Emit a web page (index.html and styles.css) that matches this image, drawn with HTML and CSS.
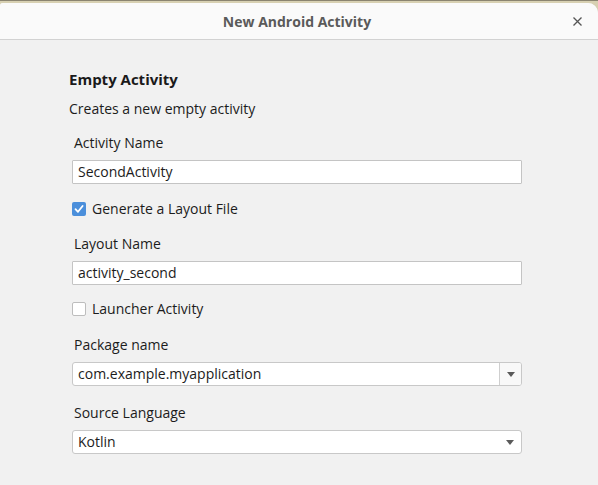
FILE: index.html
```html
<!DOCTYPE html>
<html>
<head>
<meta charset="utf-8">
<link rel="stylesheet" href="styles.css">
</head>
<body>
<div class="backdrop">
  <div class="dialog">
    <header class="titlebar">
      <span class="title">New Android Activity</span>
      <span class="close">
        <svg width="9" height="9" viewBox="0 0 9 9"><path d="M0.5 0.5L8.5 8.5M8.5 0.5L0.5 8.5" stroke="#555" stroke-width="1.3" fill="none"/></svg>
      </span>
    </header>
    <main class="content">
      <h1 class="heading">Empty Activity</h1>
      <p class="desc">Creates a new empty activity</p>

      <div class="label">Activity Name</div>
      <div class="input">SecondActivity</div>

      <div class="check first">
        <span class="box checked">
          <svg width="14" height="14" viewBox="0 0 14 14"><path d="M3.5 7.2L6 9.8L10.6 4" stroke="#fff" stroke-width="1.8" fill="none" stroke-linecap="round" stroke-linejoin="round"/></svg>
        </span>
        <span>Generate a Layout File</span>
      </div>

      <div class="label">Layout Name</div>
      <div class="input">activity_second</div>

      <div class="check">
        <span class="box"></span>
        <span>Launcher Activity</span>
      </div>

      <div class="label pkg">Package name</div>
      <div class="combo editable">
        <span class="combo-text">com.example.myapplication</span>
        <span class="combo-btn"><span class="arrow"></span></span>
      </div>

      <div class="label">Source Language</div>
      <div class="combo">
        <span class="combo-text">Kotlin</span>
        <span class="combo-btn"><span class="arrow"></span></span>
      </div>
    </main>
  </div>
</div>
</body>
</html>
```

FILE: styles.css
```css
* { box-sizing: border-box; }
html, body {
  margin: 0;
  padding: 0;
  width: 598px;
  height: 485px;
  overflow: hidden;
}
body {
  font-family: "Open Sans", "Noto Sans", sans-serif;
  font-size: 14px;
  color: #1c1c1c;
  background: #d7d0b2;
}
.backdrop {
  padding-top: 2px;
  height: 485px;
  border-top: 1px solid #8a8470;
}
.dialog {
  background: #f1f1f1;
  height: 100%;
  border-radius: 3px 10px 0 0;
  overflow: hidden;
}
.titlebar {
  height: 37px;
  background: #fafafa;
  border-bottom: 1px solid #d2d2d2;
  display: flex;
  align-items: center;
  justify-content: center;
  position: relative;
}
.title {
  font-weight: 700;
  font-size: 14px;
  color: #5a5a5a;
  margin-top: 1px;
  margin-right: 4px;
}
.close {
  position: absolute;
  right: 16px;
  top: 14px;
  display: flex;
}
.content {
  padding: 29px 0 0 69px;
  display: flex;
  flex-direction: column;
  align-items: flex-start;
}
.heading {
  margin: 0;
  font-size: 15px;
  line-height: 20px;
  font-weight: 700;
  color: #1a1a1a;
}
.desc {
  margin: 11px 0 0 0;
  line-height: 18px;
}
.label {
  margin: 16px 0 0 5px;
  line-height: 18px;
}
.check + .label { margin-top: 17px; }
.check + .label.pkg { margin-top: 18px; }
.combo + .label { margin-top: 18px; }
.input {
  margin: 8px 0 0 3px;
  width: 450px;
  height: 24px;
  background: #fff;
  border: 1px solid #c4c4c4;
  border-radius: 1px;
  padding: 0 5px;
  line-height: 22px;
}
.check {
  margin: 15px 0 0 3px;
  display: flex;
  align-items: center;
  gap: 6px;
  line-height: 18px;
}
.check.first { margin-top: 16px; }
.box {
  width: 14px;
  height: 14px;
  border-radius: 2px;
  background: #fff;
  border: 1px solid #bdbdbd;
  display: flex;
}
.box.checked {
  background: #4b8fdb;
  border: none;
}
.combo {
  margin: 8px 0 0 3px;
  width: 450px;
  height: 24px;
  background: #fff;
  border: 1px solid #c8c8c8;
  border-radius: 3px;
  display: flex;
  align-items: stretch;
  overflow: hidden;
}
.combo-text {
  flex: 1;
  padding: 0 5px;
  line-height: 22px;
}
.combo-btn {
  width: 22px;
  display: flex;
  align-items: center;
  justify-content: center;
}
.combo.editable .combo-btn {
  background: #f8f8f8;
  border-left: 1px solid #cfcfcf;
}
.arrow {
  width: 0;
  height: 0;
  border-left: 4.5px solid transparent;
  border-right: 4.5px solid transparent;
  border-top: 5px solid #5a5a5a;
  margin-top: 1px;
}
```
